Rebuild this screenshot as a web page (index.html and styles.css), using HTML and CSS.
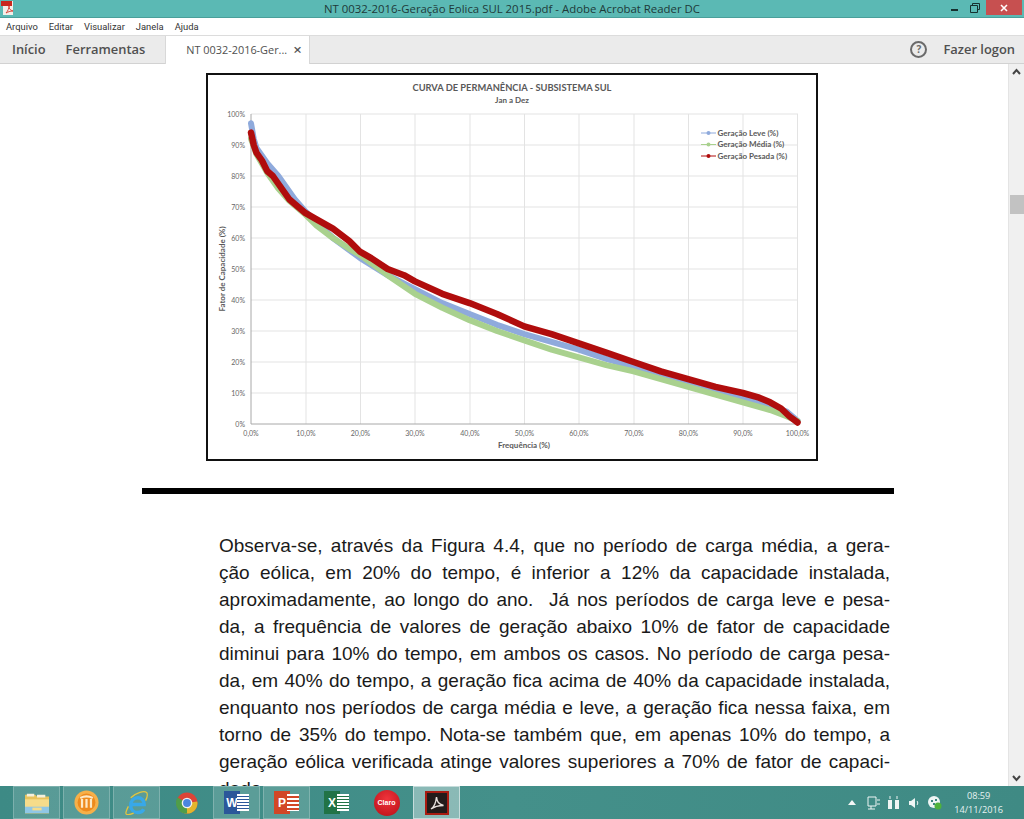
FILE: index.html
```html
<!DOCTYPE html>
<html lang="pt-BR">
<head>
    <meta charset="UTF-8">
    <title>NT 0032-2016-Geração Eolica SUL 2015.pdf - Adobe Acrobat Reader DC</title>
    <link rel="stylesheet" href="styles.css">
</head>
<body>
    <header class="titlebar">
        <svg class="app-icon" width="16" height="16" viewBox="0 0 16 16">
            <path d="M3 1h10v14H3z" fill="#f4efe9"/>
            <path d="M1 1h11v5H1z" fill="#c8281e"/>
            <path d="M6 13c2-2 3-5 3-7 0 3 1 4 4 5-3 0-5 1-7 2z" fill="none" stroke="#d8453a"/>
        </svg>
        <span class="window-title">NT 0032-2016-Geração Eolica SUL 2015.pdf - Adobe Acrobat Reader DC</span>
        <div class="window-controls">
            <svg class="win-btn" width="10" height="10" viewBox="0 0 10 10"><path d="M0 7h7" stroke="#16302f" stroke-width="2"/></svg>
            <svg class="win-btn" width="10" height="10" viewBox="0 0 10 10"><path d="M2.500 2.500v-2h7v6h-2M.5 2.500h7v7h-7z" fill="none" stroke="#16302f"/></svg>
            <div class="win-close">
                <svg width="8" height="8" viewBox="0 0 8 8"><path d="M1 1l6 6M7 1l-6 6" stroke="#fff" stroke-width="1.600"/></svg>
            </div>
        </div>
    </header>

    <nav class="menubar">
        <span>Arquivo</span>
        <span>Editar</span>
        <span>Visualizar</span>
        <span>Janela</span>
        <span>Ajuda</span>
    </nav>

    <div class="toolbar">
        <span class="tool-link">Início</span>
        <span class="tool-link tools">Ferramentas</span>
        <div class="tab">
            <span class="tab-name">NT 0032-2016-Ger...</span>
            <span class="tab-close">×</span>
        </div>
        <div class="toolbar-right">
            <span class="help">?</span>
            <span class="tool-link">Fazer logon</span>
        </div>
    </div>

    <main class="viewer">
        <div class="doc">
            <figure class="chart-box">
                <svg class="chart" width="608" height="384" viewBox="208 75 608 384">
                    <g class="grid">
                        <path d="M306 114V424M360.500 114V424M415 114V424M470 114V424M524.500 114V424M579 114V424M634 114V424M688.500 114V424M743 114V424M797.500 114V424"/>
                        <path d="M251 114H798M251 145H798M251 176H798M251 207H798M251 238H798M251 269H798M251 300H798M251 331H798M251 362H798M251 393H798"/>
                    </g>
                    <path class="axis" d="M251 114V424H798"/>

                    <text class="chart-title" x="512" y="91">CURVA DE PERMANÊNCIA - SUBSISTEMA SUL</text>
                    <text class="chart-sub" x="512" y="103">Jan a Dez</text>

                    <g class="y-ticks">
                        <text x="245" y="117">100%</text>
                        <text x="245" y="148">90%</text>
                        <text x="245" y="179">80%</text>
                        <text x="245" y="210">70%</text>
                        <text x="245" y="241">60%</text>
                        <text x="245" y="272">50%</text>
                        <text x="245" y="303">40%</text>
                        <text x="245" y="334">30%</text>
                        <text x="245" y="365">20%</text>
                        <text x="245" y="396">10%</text>
                        <text x="245" y="427">0%</text>
                    </g>
                    <g class="x-ticks">
                        <text x="251" y="436">0,0%</text>
                        <text x="306" y="436">10,0%</text>
                        <text x="360.500" y="436">20,0%</text>
                        <text x="415" y="436">30,0%</text>
                        <text x="470" y="436">40,0%</text>
                        <text x="524.500" y="436">50,0%</text>
                        <text x="579" y="436">60,0%</text>
                        <text x="634" y="436">70,0%</text>
                        <text x="688.500" y="436">80,0%</text>
                        <text x="743" y="436">90,0%</text>
                        <text x="797.500" y="436">100,0%</text>
                    </g>
                    <text class="axis-name" x="524" y="448">Frequência (%)</text>
                    <text class="axis-name" transform="translate(225 269) rotate(-90)">Fator de Capacidade (%)</text>

                    <!-- curves in data units: x = frequency %, y = capacity % -->
                    <g class="curves">
                        <g transform="translate(251 424) scale(5.465 -3.1)">
                            <polyline class="curve leve" points="0,97 .5,92 1,89 2,86.500 3,84 5,80 6,77.500 8,72.500 10,68.500 12,65 15,60 20,53.500 25,48 30,43.500 35,39 40,35.500 45,32 50,29 55,26.500 60,24 65,21 70,18.500 75,16 80,13 85,11 90,8.500 95,6 98,4 100,1"/>
                            <polyline class="curve media" points="0,92 1,87 2,84 3,81 5,76 7,72 10,67.500 12,64 15,60 18,56.500 20,54.500 25,48 30,42 35,37.500 40,33.500 45,30 50,27 55,24 60,21.500 65,19 70,17 75,14.500 80,12 85,9.500 90,7 95,4.500 98,2.500 100,1"/>
                            <polyline class="curve pesada" points="0,94 .5,90 1,87.500 2,85 3,81.500 4,80 5,77.500 6,75 7,72.500 8,71 10,68 12,66 15,63 18,59 20,55.500 22,53.500 25,50 28,48 30,46 35,42 40,39 45,35.500 50,31.500 55,29 60,26 65,23 70,20 75,17 80,14.500 85,12 90,10 93,8.500 95,7 97,5 98.500,2.500 100,.5"/>
                        </g>
                    </g>

                    <g class="legend">
                        <path class="leg-leve" d="M701 133H716"/>
                        <circle class="leg-leve-dot" cx="708.500" cy="133" r="2"/>
                        <text x="717.500" y="135.500">Geração Leve (%)</text>
                        <path class="leg-media" d="M701 144.500H716"/>
                        <circle class="leg-media-dot" cx="708.500" cy="144.500" r="2"/>
                        <text x="717.500" y="147">Geração Média (%)</text>
                        <path class="leg-pesada" d="M701 156H716"/>
                        <circle class="leg-pesada-dot" cx="708.500" cy="156" r="2"/>
                        <text x="717.500" y="158.500">Geração Pesada (%)</text>
                    </g>
                </svg>
            </figure>

            <div class="rule"></div>

            <div class="page-text">
                <span>Observa-se, através da Figura 4.4, que no período de carga média, a gera-</span>
                <span>ção eólica, em 20% do tempo, é inferior a 12% da capacidade instalada,</span>
                <span>aproximadamente, ao longo do ano.&nbsp; Já nos períodos de carga leve e pesa-</span>
                <span>da, a frequência de valores de geração abaixo 10% de fator de capacidade</span>
                <span>diminui para 10% do tempo, em ambos os casos. No período de carga pesa-</span>
                <span>da, em 40% do tempo, a geração fica acima de 40% da capacidade instalada,</span>
                <span>enquanto nos períodos de carga média e leve, a geração fica nessa faixa, em</span>
                <span>torno de 35% do tempo. Nota-se também que, em apenas 10% do tempo, a</span>
                <span>geração eólica verificada atinge valores superiores a 70% de fator de capaci-</span>
                <span class="last-line">dade.</span>
            </div>
        </div>

        <div class="scrollbar">
            <svg class="arrow" width="15" height="16" viewBox="0 0 15 16"><path d="M4 10l3.500-4 3.500 4" fill="none" stroke="#444" stroke-width="2"/></svg>
            <div class="thumb"></div>
            <svg class="arrow arrow-down" width="15" height="16" viewBox="0 0 15 16"><path d="M4 6l3.500 4 3.500-4" fill="none" stroke="#444" stroke-width="2"/></svg>
        </div>
    </main>

    <footer class="taskbar">
        <div class="task-item tile">
            <svg width="28" height="24" viewBox="0 0 30 26">
                <path d="M2 4h11l2 2h13v18H2z" fill="#e8c35c"/>
                <path d="M4 3h8v3H4zM15 4h9v3h-9z" fill="#f4f0dc"/>
                <path d="M2 9h26v15H2z" fill="#f6dc8a"/>
                <path d="M2 17h26v7H2z" fill="#8fc7e6"/>
                <path d="M10 18h10v3H10z" fill="#f6dc8a"/>
            </svg>
        </div>
        <div class="task-item tile">
            <svg width="25" height="25" viewBox="0 0 28 28">
                <circle cx="14" cy="14" r="13.500" fill="#f7b049"/>
                <circle cx="14" cy="14" r="10" fill="#ee8a1d"/>
                <path d="M7 9c4-2 10-2 14 0M9 10v10M14 10v10M19 10v10" fill="none" stroke="#fde9c6" stroke-width="2.500"/>
            </svg>
        </div>
        <div class="task-item tile">
            <svg width="25" height="24" viewBox="0 0 26 25">
                <path d="M8.500 14H21C21 9.500 18 7 14.500 7 10 7 7 10.500 7 15 7 19.500 10 22.500 14.500 22.500 17.500 22.500 19.500 21 20.500 19" fill="none" stroke="#38a8e8" stroke-width="3.600"/>
                <path d="M7 7C13 1.500 21-.5 23.500 1.500 25 3.500 24 7 22.500 10M4.500 16C2 21 1 24 3 24.500 5.500 25 8 24 10 23" fill="none" stroke="#e3c53e" stroke-width="1.300"/>
            </svg>
        </div>
        <div class="task-item">
            <svg width="22" height="22" viewBox="0 0 28 28">
                <circle cx="14" cy="14" r="13.500" fill="#dc4437"/>
                <path d="M14 14L3.500 21A13 13 0 0 0 14 27.500 13 13 0 0 0 27 12z" fill="#e3b52c"/>
                <path d="M14 14L14 27.500A13.500 13.500 0 0 1 2 7z" fill="#4f9d4a"/>
                <circle cx="14" cy="14" r="6.800" fill="#f2f2f2"/>
                <circle cx="14" cy="14" r="5" fill="#4a86e0"/>
            </svg>
        </div>
        <div class="task-item tile">
            <div class="office-icon">
                <span class="office-badge word">W</span>
                <span class="office-lines word-lines"></span>
            </div>
        </div>
        <div class="task-item tile">
            <div class="office-icon">
                <span class="office-badge ppt">P</span>
                <span class="office-lines ppt-lines"></span>
            </div>
        </div>
        <div class="task-item">
            <div class="office-icon">
                <span class="office-badge excel">X</span>
                <span class="office-lines excel-lines"></span>
            </div>
        </div>
        <div class="task-item">
            <div class="claro"><span>Claro</span></div>
        </div>
        <div class="task-item tile active">
            <svg width="24" height="24" viewBox="0 0 24 24">
                <path d="M0 0h24v24H0z" fill="#a81c12"/>
                <path d="M2 2h20v20H2z" fill="#231b1a"/>
                <path d="M6 18c3-2 5-7 5.500-12 .5 5 2 7 7 8.500-4 0-9 1-12.500 3.500z" fill="none" stroke="#e8e0dc" stroke-width="1.400"/>
            </svg>
        </div>

        <div class="tray">
            <svg class="tray-up" width="8" height="5" viewBox="0 0 8 5"><path d="M0 5l4-5 4 5z" fill="#f2f6f5"/></svg>
            <svg width="14" height="14" viewBox="0 0 14 14"><path d="M1 1h8v9H1zM10 4h3M10 8h3M4 10v3M1 13h7" fill="none" stroke="#eef5f4"/></svg>
            <svg width="14" height="14" viewBox="0 0 14 14"><path d="M1 4h4v9H1zM8 4h4v9H8z" fill="#eef5f4"/><path d="M3 0v3M10 0v3" stroke="#eef5f4"/></svg>
            <svg width="14" height="14" viewBox="0 0 14 14"><path d="M2 5h2l4-3v10L4 9H2z" fill="#eef5f4"/><path d="M10 5c1 1 1 3 0 4" fill="none" stroke="#eef5f4"/></svg>
            <svg width="15" height="15" viewBox="0 0 15 15"><circle cx="7" cy="7" r="6" fill="#eef5f4"/><path d="M4 5h2v2H4zM8 4h2v2H8zM6 8h2v2H6z" fill="#3c8580"/><circle cx="11" cy="11" r="3.500" fill="#4fb23c"/></svg>
            <div class="clock">
                <span>08:59</span>
                <span>14/11/2016</span>
            </div>
        </div>
    </footer>
</body>
</html>
```

FILE: styles.css
```css
* {
    box-sizing: border-box;
}

html, body {
    height: 100%;
    margin: 0;
    overflow: hidden;
}

body {
    display: flex;
    flex-direction: column;
    font-family: "Open Sans", "Liberation Sans", sans-serif;
    color: #333;
    background: #fff;
}

/* window chrome */
.titlebar {
    position: relative;
    flex: 0 0 18px;
    display: flex;
    align-items: center;
    justify-content: center;
    background: #5bb9b4;
    border-bottom: 1px solid #4a9f9a;
}

.app-icon {
    position: absolute;
    left: 0;
    top: 0;
}

.window-title {
    font-size: 11.400px;
    color: #1e3a39;
}

.window-controls {
    position: absolute;
    right: 2px;
    top: 0;
    display: flex;
    align-items: flex-start;
}

.win-btn {
    margin: 3px 6px 0 0;
}

.win-btn + .win-btn {
    margin: 3px 6px 0 3px;
}

.win-close {
    width: 36px;
    height: 15px;
    display: flex;
    align-items: center;
    justify-content: center;
    background: #c75050;
}

.menubar {
    flex: 0 0 17px;
    display: flex;
    align-items: center;
    gap: 11px;
    padding-left: 6px;
    font-family: Roboto, "Open Sans", sans-serif;
    font-size: 9.400px;
    color: #333;
    background: #fff;
}

.toolbar {
    flex: 0 0 29px;
    display: flex;
    align-items: stretch;
    background: #ebebeb;
    border-top: 1px solid #dcdcdc;
    border-bottom: 1px solid #d2d2d2;
    padding-left: 12px;
}

.tool-link {
    align-self: center;
    margin-bottom: 2px;
    font-size: 12.900px;
    font-weight: 600;
    color: #505050;
}

.tools {
    margin-left: 20px;
}

.tab {
    display: flex;
    align-items: center;
    width: 145px;
    margin: 0 0 -1px 20px;
    padding: 0 0 2px 20px;
    background: #fff;
    border-left: 1px solid #d8d8d8;
    border-right: 1px solid #d8d8d8;
}

.tab-name {
    font-size: 10.900px;
    color: #505050;
}

.tab-close {
    margin-left: 6px;
    font-size: 15px;
    line-height: 1;
    font-weight: 600;
    color: #555;
}

.toolbar-right {
    margin-left: auto;
    display: flex;
    align-items: center;
    padding-right: 9px;
}

.help {
    width: 17px;
    height: 17px;
    margin: 0 16px 1px 0;
    border: 2px solid #6a6a6a;
    border-radius: 50%;
    display: flex;
    align-items: center;
    justify-content: center;
    font-size: 10px;
    font-weight: 700;
    color: #6a6a6a;
}

/* document area */
.viewer {
    flex: 1;
    min-height: 0;
    display: flex;
}

.doc {
    flex: 1;
    min-width: 0;
    overflow: hidden;
    padding-top: 9px;
    background: #fff;
}

.chart-box {
    width: 612px;
    height: 388px;
    margin: 0 0 0 206px;
    border: 2px solid #111;
    background: #fff;
}

.chart {
    display: block;
}

.curves {
    filter: blur(0.4px);
}

.grid path {
    fill: none;
    stroke: #e3e3e3;
    stroke-width: 1;
}

.axis {
    fill: none;
    stroke: #a8a8a8;
    stroke-width: 1;
}

.chart-title,
.chart-sub,
.axis-name {
    font-family: Lato, "Open Sans", sans-serif;
    font-weight: 700;
    fill: #595959;
    text-anchor: middle;
}

.chart-title {
    font-size: 9.300px;
}

.chart-sub,
.axis-name {
    font-size: 8px;
}

.y-ticks text,
.x-ticks text {
    font-family: Lato, "Open Sans", sans-serif;
    font-size: 7px;
    fill: #666;
}

.y-ticks text {
    text-anchor: end;
}

.x-ticks text {
    text-anchor: middle;
}

.curve {
    fill: none;
    stroke-linecap: round;
    stroke-linejoin: round;
    vector-effect: non-scaling-stroke;
}

.leve {
    stroke: #8faadc;
    stroke-width: 6;
}

.media {
    stroke: #a9d18e;
    stroke-width: 6;
}

.pesada {
    stroke: #b00d0d;
    stroke-width: 6.500;
}

.legend text {
    font-family: Lato, "Open Sans", sans-serif;
    font-size: 8px;
    font-weight: 700;
    fill: #595959;
}

.leg-leve { stroke: #8faadc; }
.leg-media { stroke: #a9d18e; }
.leg-pesada { stroke: #b00d0d; }
.leg-leve-dot { fill: #8faadc; }
.leg-media-dot { fill: #a9d18e; }
.leg-pesada-dot { fill: #b00d0d; }

.rule {
    width: 752px;
    height: 6px;
    margin: 27px 0 0 142px;
    background: #000;
}

.page-text {
    width: 671px;
    margin: 38px 0 0 219px;
    font-family: "Liberation Sans", Arial, sans-serif;
    font-size: 19px;
    line-height: 27px;
    color: #1a1a1a;
}

.page-text span {
    display: block;
    text-align: justify;
    text-align-last: justify;
    white-space: nowrap;
}

.page-text .last-line {
    text-align-last: left;
}

.scrollbar {
    flex: 0 0 15px;
    display: flex;
    flex-direction: column;
    background: #f0f0f0;
    border-left: 1px solid #e4e4e4;
}

.arrow {
    display: block;
}

.thumb {
    height: 19px;
    margin: 115px 0 0 1px;
    background: #c2c2c2;
}

.arrow-down {
    margin-top: auto;
}

/* windows taskbar */
.taskbar {
    flex: 0 0 33px;
    display: flex;
    align-items: stretch;
    gap: 3px;
    padding-left: 13px;
    background: linear-gradient(90deg, #3d8a85, #44908a 50%, #3f8a84);
}

.task-item {
    width: 47px;
    display: flex;
    align-items: center;
    justify-content: center;
}

.tile {
    background: rgba(255, 255, 255, 0.14);
    border: 1px solid rgba(255, 255, 255, 0.22);
}

.active {
    background: rgba(255, 255, 255, 0.38);
    border-color: rgba(255, 255, 255, 0.5);
}

.office-icon {
    position: relative;
    width: 25px;
    height: 23px;
}

.office-badge {
    position: absolute;
    left: 0;
    top: 0;
    width: 16px;
    height: 23px;
    display: flex;
    align-items: center;
    justify-content: center;
    font-family: "Liberation Sans", sans-serif;
    font-size: 12px;
    font-weight: 700;
    color: #fff;
}

.word { background: #2b579a; }
.ppt { background: #d24726; }
.excel { background: #217346; }

.office-lines {
    position: absolute;
    right: 0;
    top: 3px;
    width: 12px;
    height: 17px;
    background: repeating-linear-gradient(#fff 0 2px, #2b579a 2px 3px);
}

.ppt-lines {
    background: repeating-linear-gradient(#fff 0 2px, #d24726 2px 4px);
}

.excel-lines {
    background: repeating-linear-gradient(#fff 0 2px, #217346 2px 3px);
}

.claro {
    width: 26px;
    height: 26px;
    border-radius: 50%;
    display: flex;
    align-items: center;
    justify-content: center;
    background: radial-gradient(circle at 50% 35%, #f0343c, #b80f16);
    font-family: "Liberation Sans", sans-serif;
    font-size: 7px;
    font-weight: 700;
    color: #fff;
}

.tray {
    margin-left: auto;
    display: flex;
    align-items: center;
    gap: 6px;
    padding-right: 21px;
    color: #e6f2f1;
}

.tray-up {
    margin-right: 5px;
}

.clock {
    display: flex;
    flex-direction: column;
    align-items: center;
    margin-left: 6px;
    font-size: 9.200px;
    line-height: 14px;
}
```
